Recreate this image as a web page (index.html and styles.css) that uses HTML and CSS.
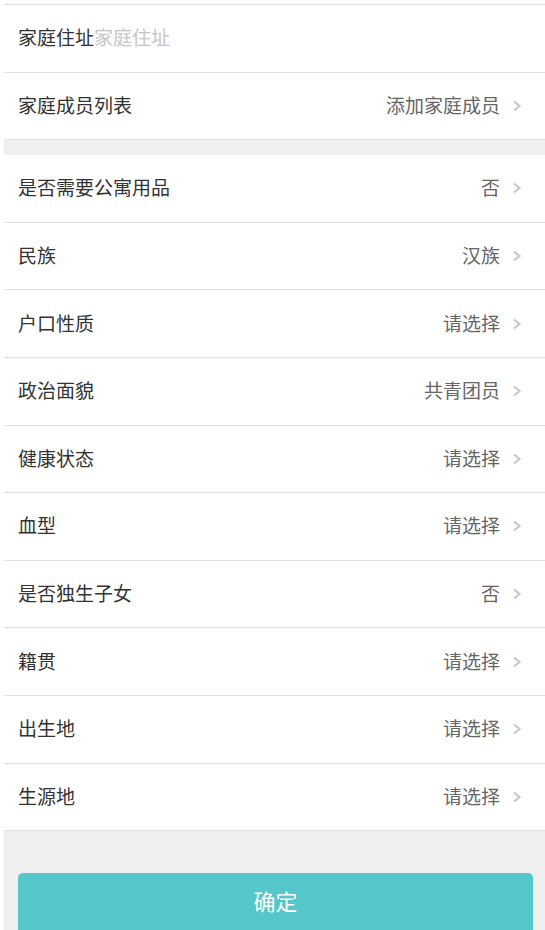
FILE: index.html
```html
<!DOCTYPE html>
<html lang="zh-CN">
<head>
<meta charset="utf-8">
<link rel="stylesheet" href="styles.css">
</head>
<body>
<div class="page">
  <div class="group">
    <div class="row-stub"></div>
    <div class="row">
      <span class="label">家庭住址</span><span class="placeholder">家庭住址</span>
    </div>
    <div class="row">
      <span class="label">家庭成员列表</span>
      <span class="value">添加家庭成员</span>
      <svg class="chev" viewBox="0 0 10 12"><path d="M2 1.5 L7.5 6 L2 10.5" fill="none" stroke="#c8c8c8" stroke-width="2.2"/></svg>
    </div>
  </div>
  <div class="gap"></div>
  <div class="group">
    <div class="row"><span class="label">是否需要公寓用品</span><span class="value">否</span><svg class="chev" viewBox="0 0 10 12"><path d="M2 1.5 L7.5 6 L2 10.5" fill="none" stroke="#c8c8c8" stroke-width="2.2"/></svg></div>
    <div class="row"><span class="label">民族</span><span class="value">汉族</span><svg class="chev" viewBox="0 0 10 12"><path d="M2 1.5 L7.5 6 L2 10.5" fill="none" stroke="#c8c8c8" stroke-width="2.2"/></svg></div>
    <div class="row"><span class="label">户口性质</span><span class="value">请选择</span><svg class="chev" viewBox="0 0 10 12"><path d="M2 1.5 L7.5 6 L2 10.5" fill="none" stroke="#c8c8c8" stroke-width="2.2"/></svg></div>
    <div class="row"><span class="label">政治面貌</span><span class="value">共青团员</span><svg class="chev" viewBox="0 0 10 12"><path d="M2 1.5 L7.5 6 L2 10.5" fill="none" stroke="#c8c8c8" stroke-width="2.2"/></svg></div>
    <div class="row"><span class="label">健康状态</span><span class="value">请选择</span><svg class="chev" viewBox="0 0 10 12"><path d="M2 1.5 L7.5 6 L2 10.5" fill="none" stroke="#c8c8c8" stroke-width="2.2"/></svg></div>
    <div class="row"><span class="label">血型</span><span class="value">请选择</span><svg class="chev" viewBox="0 0 10 12"><path d="M2 1.5 L7.5 6 L2 10.5" fill="none" stroke="#c8c8c8" stroke-width="2.2"/></svg></div>
    <div class="row"><span class="label">是否独生子女</span><span class="value">否</span><svg class="chev" viewBox="0 0 10 12"><path d="M2 1.5 L7.5 6 L2 10.5" fill="none" stroke="#c8c8c8" stroke-width="2.2"/></svg></div>
    <div class="row"><span class="label">籍贯</span><span class="value">请选择</span><svg class="chev" viewBox="0 0 10 12"><path d="M2 1.5 L7.5 6 L2 10.5" fill="none" stroke="#c8c8c8" stroke-width="2.2"/></svg></div>
    <div class="row"><span class="label">出生地</span><span class="value">请选择</span><svg class="chev" viewBox="0 0 10 12"><path d="M2 1.5 L7.5 6 L2 10.5" fill="none" stroke="#c8c8c8" stroke-width="2.2"/></svg></div>
    <div class="row"><span class="label">生源地</span><span class="value">请选择</span><svg class="chev" viewBox="0 0 10 12"><path d="M2 1.5 L7.5 6 L2 10.5" fill="none" stroke="#c8c8c8" stroke-width="2.2"/></svg></div>
  </div>
  <div class="footer">
    <button class="confirm">确定</button>
  </div>
</div>
</body>
</html>
```

FILE: styles.css
```css
html, body {
  margin: 0;
  padding: 0;
  background: #ffffff;
  height: 100%;
  overflow: hidden;
}
body {
  font-family: "Noto Sans CJK SC", "Noto Sans", sans-serif;
}
.page {
  margin-left: 4px;
  background: #efeff0;
  min-height: 100%;
}
.group {
  background: #ffffff;
}
.row-stub {
  height: 5px;
  border-bottom: 1px solid #e2e2e2;
  box-sizing: border-box;
}
.row {
  display: flex;
  align-items: center;
  height: 67.6px;
  box-sizing: border-box;
  border-bottom: 1px solid #e2e2e2;
  padding: 0 23px 3px 14px;
  font-size: 19px;
  line-height: 1;
}
.label {
  color: #333333;
}
.placeholder {
  color: #c6c6c6;
}
.value {
  margin-left: auto;
  color: #666666;
}
.chev {
  width: 10px;
  height: 12px;
  margin-left: 12px;
  margin-top: 3px;
  flex: none;
}
.gap {
  height: 15px;
}
.footer {
  padding: 42px 12px 0 14px;
}
.confirm {
  display: block;
  width: 100%;
  height: 62px;
  border: none;
  border-radius: 5px;
  background: #55c6ca;
  color: #ffffff;
  font-family: "Noto Sans CJK SC", "Noto Sans", sans-serif;
  font-size: 22px;
  padding: 0 0 8px;
}
```
